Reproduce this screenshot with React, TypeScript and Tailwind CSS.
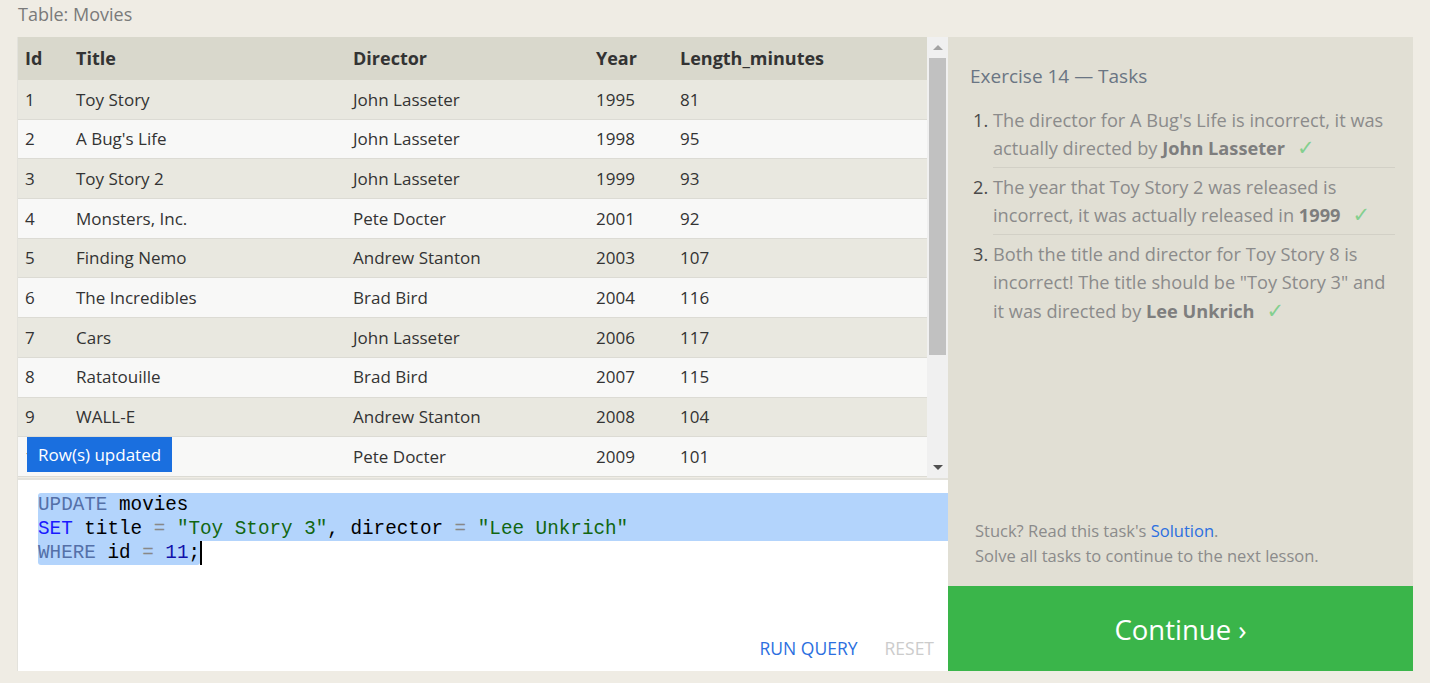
import React from 'react'

type Movie = {
  id: number
  title: string
  director: string
  year: number
  length: number
}

const movies: Movie[] = [
  { id: 1, title: 'Toy Story', director: 'John Lasseter', year: 1995, length: 81 },
  { id: 2, title: "A Bug's Life", director: 'John Lasseter', year: 1998, length: 95 },
  { id: 3, title: 'Toy Story 2', director: 'John Lasseter', year: 1999, length: 93 },
  { id: 4, title: 'Monsters, Inc.', director: 'Pete Docter', year: 2001, length: 92 },
  { id: 5, title: 'Finding Nemo', director: 'Andrew Stanton', year: 2003, length: 107 },
  { id: 6, title: 'The Incredibles', director: 'Brad Bird', year: 2004, length: 116 },
  { id: 7, title: 'Cars', director: 'John Lasseter', year: 2006, length: 117 },
  { id: 8, title: 'Ratatouille', director: 'Brad Bird', year: 2007, length: 115 },
  { id: 9, title: 'WALL-E', director: 'Andrew Stanton', year: 2008, length: 104 },
  { id: 10, title: 'Up', director: 'Pete Docter', year: 2009, length: 101 },
]

const uiFont = { fontFamily: '"Open Sans", "Noto Sans", sans-serif' }

const Check = () => (
  <span
    className="ml-[12px] text-[21px] text-[#84cf8f]"
    style={{ fontFamily: '"DejaVu Sans", sans-serif' }}
  >
    ✓
  </span>
)

const MoviesTable = () => (
  <div className="relative flex h-[441px] overflow-hidden">
    <div className="flex-1 overflow-hidden">
      <div className="flex h-[43px] items-center bg-[#d9d8cc] text-[18px] font-bold text-[#333]">
        <div className="w-[51px] pl-[7px]">Id</div>
        <div className="w-[277px] pl-[7px]">Title</div>
        <div className="w-[243px] pl-[7px]">Director</div>
        <div className="w-[84px] pl-[7px]">Year</div>
        <div className="flex-1 pl-[7px]">Length_minutes</div>
      </div>
      {movies.map((m, i) => (
        <div
          key={m.id}
          className={`flex h-[39.7px] items-center border-b border-[#dcdbd4] text-[17px] text-[#333] ${
            i % 2 === 0 ? 'bg-[#e9e8e0]' : 'bg-[#f8f8f7]'
          }`}
        >
          <div className="w-[51px] pl-[7px]">{m.id}</div>
          <div className="w-[277px] pl-[7px]">{m.title}</div>
          <div className="w-[243px] pl-[7px]">{m.director}</div>
          <div className="w-[84px] pl-[7px]">{m.year}</div>
          <div className="flex-1 pl-[7px]">{m.length}</div>
        </div>
      ))}
    </div>
    <div className="flex w-[21px] flex-col items-center bg-[#f0f0f0]">
      <div className="flex h-[21px] items-center justify-center">
        <div className="h-0 w-0 border-x-[5px] border-b-[5px] border-x-transparent border-b-[#a3a3a3]" />
      </div>
      <div className="h-[297px] w-[17px] bg-[#c1c1c1]" />
      <div className="flex-1" />
      <div className="flex h-[21px] items-center justify-center">
        <div className="h-0 w-0 border-x-[5px] border-t-[5px] border-x-transparent border-t-[#505050]" />
      </div>
    </div>
    <div className="absolute left-[9px] top-[400px] flex h-[35px] items-center bg-[#1a6fdf] px-[11px] text-[17px] text-white">
      Row(s) updated
    </div>
  </div>
)

const Editor = () => (
  <div className="flex h-[193px] flex-col border-t-2 border-[#e3e2dc] bg-white">
    <div
      className="pl-[20px] pt-[13px] text-[19.3px] leading-[24px]"
      style={{ fontFamily: '"Liberation Mono", "DejaVu Sans Mono", monospace' }}
    >
      <div className="rounded-tl-[3px] bg-[#b3d4fc]">
        <span className="text-[#5470a8]">UPDATE</span> <span className="text-black">movies</span>
      </div>
      <div className="bg-[#b3d4fc] whitespace-pre">
        <span className="text-[#1a1aff]">SET</span> <span className="text-black">title</span>{' '}
        <span className="text-[#888]">=</span> <span className="text-[#116611]">"Toy Story 3"</span>
        <span className="text-black">, director</span> <span className="text-[#888]">=</span>{' '}
        <span className="text-[#116611]">"Lee Unkrich"</span>
      </div>
      <div className="flex">
        <span className="rounded-b-[3px] bg-[#b3d4fc] whitespace-pre">
          <span className="text-[#5470a8]">WHERE</span> <span className="text-black">id</span>{' '}
          <span className="text-[#888]">=</span> <span className="text-[#1111aa]">11</span>
          <span className="text-black">;</span>
        </span>
        <span className="h-[24px] w-[2px] bg-black" />
      </div>
    </div>
    <div className="flex-1" />
    <div className="flex justify-end gap-[27px] pb-[10px] pr-[14px] text-[17.5px]" style={uiFont}>
      <span className="text-[#2c6fe0]">RUN QUERY</span>
      <span className="text-[#cccccc]">RESET</span>
    </div>
  </div>
)

const tasks = [
  {
    text: "The director for A Bug's Life is incorrect, it was actually directed by ",
    bold: 'John Lasseter',
  },
  {
    text: 'The year that Toy Story 2 was released is incorrect, it was actually released in ',
    bold: '1999',
  },
  {
    text: 'Both the title and director for Toy Story 8 is incorrect! The title should be "Toy Story 3" and it was directed by ',
    bold: 'Lee Unkrich',
  },
]

const TasksPanel = () => (
  <div className="flex w-[465px] flex-col">
    <div className="flex h-[549px] flex-col bg-[#e1dfd4] pl-[22px] pr-[18px]">
      <div className="pt-[25px] text-[19px] text-[#6a7583]">Exercise 14 — Tasks</div>
      <ol className="mt-[15px] pl-[3px]">
        {tasks.map((t, i) => (
          <li key={i} className={`flex ${i < tasks.length - 1 ? 'mb-[5px]' : ''}`}>
            <span className="w-[20px] shrink-0 text-[18.2px] leading-[28px] text-[#4a4a4a]">
              {i + 1}.
            </span>
            <div
              className={`flex-1 text-[18.2px] leading-[28.5px] text-[#8b8b8b] ${
                i < tasks.length - 1 ? 'border-b border-[#d2d0c6] pb-[4px]' : ''
              }`}
            >
              {t.text}
              <b className="text-[#7e7e7e]">{t.bold}</b>
              <Check />
            </div>
          </li>
        ))}
      </ol>
      <div className="flex-1" />
      <div className="pb-[18px] pl-[5px] text-[16.5px] leading-[25px] text-[#8b8b8b]">
        <div>
          Stuck? Read this task's <span className="text-[#2c6fe0]">Solution</span>.
        </div>
        <div>Solve all tasks to continue to the next lesson.</div>
      </div>
    </div>
    <div className="flex h-[85px] items-center justify-center bg-[#3ab54a] pt-[2px] text-[27.5px] text-white">
      Continue ›
    </div>
  </div>
)

export default function App() {
  return (
    <div className="min-h-[683px] bg-[#efece4]" style={uiFont}>
      <div className="pl-[18px] pt-[2px] text-[18px] leading-[24px] text-[#7a7a7a]">Table: Movies</div>
      <div className="mt-[11px] flex pl-[17px]">
        <div className="flex w-[931px] flex-col border-l border-[#e3e2dc]">
          <MoviesTable />
          <Editor />
        </div>
        <TasksPanel />
      </div>
    </div>
  )
}
